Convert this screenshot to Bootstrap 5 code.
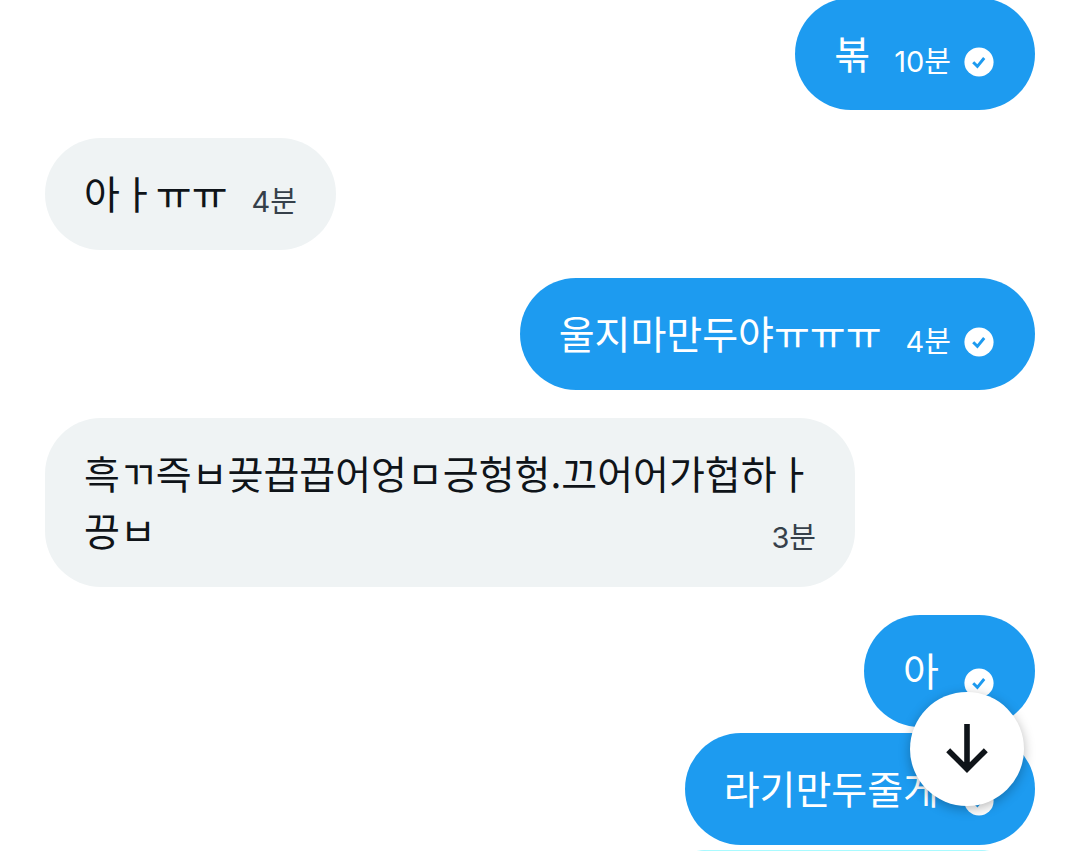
<!DOCTYPE html>
<html lang="ko">
<head>
<meta charset="utf-8">
<meta name="viewport" content="width=device-width, initial-scale=1">
<title>쪽지</title>
<link href="https://cdn.jsdelivr.net/npm/bootstrap@5.3.0/dist/css/bootstrap.min.css" rel="stylesheet">
<style>
  body { background: #fff; color: #0f1419; font-family: "Noto Sans CJK KR", sans-serif; }
  .thread { padding: 0 45px; margin-top: -2px; }
  .msg-group { display: flex; flex-direction: column; gap: 28px; }
  .msg-run { display: flex; flex-direction: column; gap: 6px; align-items: flex-end; }
  .bubble { border-radius: 56px; padding: 26px 39px 29px; max-width: 810px; font-size: 39px; line-height: 57px; }
  .bubble p { word-break: break-all; }
  .received { background: #eff3f4; }
  .sent { background: #1d9bf0; color: #fff; padding-right: 40px; }
  .stamp { font-family: Inter, "Noto Sans CJK KR", sans-serif; font-size: 29px; line-height: 40px; white-space: nowrap; }
  .received .stamp { color: #36404a; }
  .meta { gap: 12px; margin-left: 24px; margin-bottom: -1px; }
  .tick { width: 32px; height: 32px; }
  .float-stamp { margin-top: 17px; }
  .upcoming { width: 384px; height: 112px; margin-top: -1px; border-top: 1px solid #a9fbff; }
  .jump { right: 56px; bottom: 45px; width: 114px; height: 114px; background: #fff; color: #0f1419; box-shadow: 0 3px 12px rgba(0,0,0,.28); }
  .jump svg { width: 60px; height: 60px; }
</style>
</head>
<body>
<svg class="d-none" aria-hidden="true">
  <symbol id="tick" viewBox="0 0 32 32">
    <circle cx="16" cy="16" r="14.6" fill="#fff"/>
    <path d="M10.200 16.200l4.200 4.200 6.800-8.400" fill="none" stroke="#1d9bf0" stroke-width="2.900"/>
  </symbol>
</svg>
<div class="vh-100 overflow-hidden position-relative">
  <main class="thread">
    <div class="msg-group">
      <div class="bubble sent d-flex align-items-end align-self-end">
        <p class="m-0">볶</p>
        <div class="meta d-flex align-items-center"><time class="stamp">10분</time><svg class="tick" role="img" aria-label="전송됨"><use href="#tick"/></svg></div>
      </div>
      <div class="bubble received d-flex align-items-end align-self-start">
        <p class="m-0">아ㅏㅠㅠ</p>
        <div class="meta d-flex align-items-center"><time class="stamp">4분</time></div>
      </div>
      <div class="bubble sent d-flex align-items-end align-self-end">
        <p class="m-0">울지마만두야ㅠㅠㅠ</p>
        <div class="meta d-flex align-items-center"><time class="stamp">4분</time><svg class="tick" role="img" aria-label="전송됨"><use href="#tick"/></svg></div>
      </div>
      <div class="bubble received align-self-start">
        <p class="m-0"><span>흑ㄲ즉ㅂ끚끕끕어엉ㅁ긍헝헝.끄어어가헙하ㅏ</span><wbr><span>끙ㅂ</span><time class="stamp float-stamp float-end">3분</time></p>
      </div>
      <div class="msg-run">
        <div class="bubble sent d-flex align-items-end">
          <p class="m-0">아</p>
          <div class="meta d-flex align-items-center"><svg class="tick" role="img" aria-label="전송됨"><use href="#tick"/></svg></div>
        </div>
        <div class="bubble sent d-flex align-items-end">
          <p class="m-0">라기만두줄게</p>
          <div class="meta d-flex align-items-center"><svg class="tick" role="img" aria-label="전송됨"><use href="#tick"/></svg></div>
        </div>
        <div class="bubble sent upcoming"></div>
      </div>
    </div>
  </main>
  <button type="button" class="jump btn border-0 rounded-circle position-absolute p-0 d-flex align-items-center justify-content-center" aria-label="맨 아래로">
    <svg viewBox="0 0 60 60" fill="none" stroke="currentColor" stroke-width="5.6" aria-hidden="true"><path d="M30 5v45M11.2 31.2L30 50l18.800-18.800"/></svg>
  </button>
</div>
<script src="https://cdn.jsdelivr.net/npm/bootstrap@5.3.0/dist/js/bootstrap.bundle.min.js"></script>
</body>
</html>
